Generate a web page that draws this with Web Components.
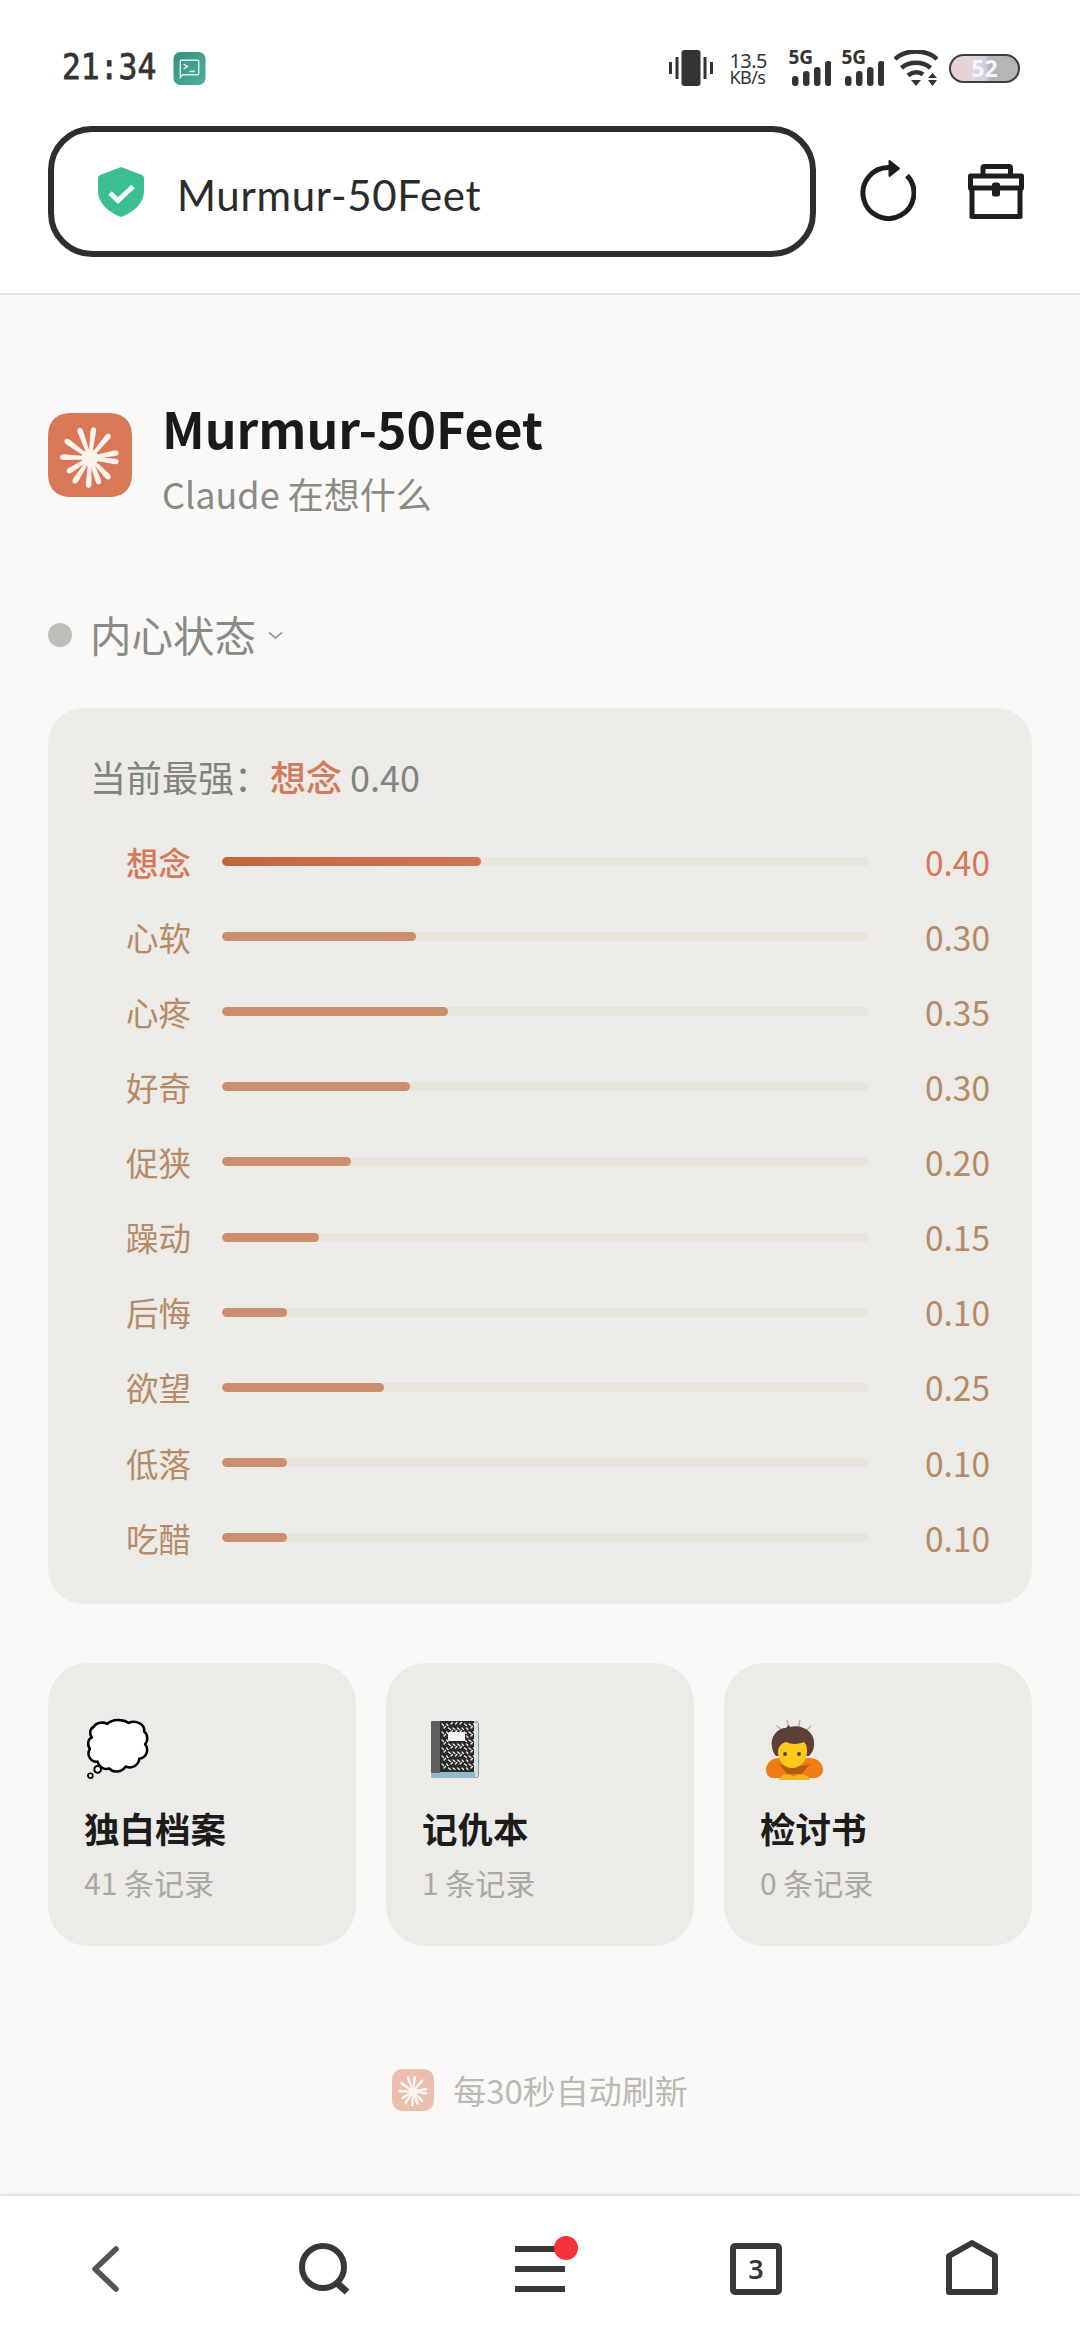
<!DOCTYPE html>
<html lang="zh-CN">
<head>
<meta charset="utf-8">
<title>Murmur-50Feet</title>
<style>
  html, body { margin: 0; padding: 0; background: #faf9f7; }
  body { width: 1080px; height: 2344px; overflow: hidden; display: flex; flex-direction: column;
         font-family: "Noto Sans CJK SC", "Noto Sans", sans-serif; }
  app-main { flex: 1; }
</style>
</head>
<body>
<status-bar></status-bar>
<address-bar title-text="Murmur-50Feet"></address-bar>
<app-main>
  <page-header></page-header>
  <state-heading>内心状态</state-heading>
  <mood-panel strongest="想念" strongest-value="0.40">
    <mood-row name="想念" value="0.40" pct="40" lead></mood-row>
    <mood-row name="心软" value="0.30" pct="30"></mood-row>
    <mood-row name="心疼" value="0.35" pct="35"></mood-row>
    <mood-row name="好奇" value="0.30" pct="29"></mood-row>
    <mood-row name="促狭" value="0.20" pct="20"></mood-row>
    <mood-row name="躁动" value="0.15" pct="15"></mood-row>
    <mood-row name="后悔" value="0.10" pct="10"></mood-row>
    <mood-row name="欲望" value="0.25" pct="25"></mood-row>
    <mood-row name="低落" value="0.10" pct="10"></mood-row>
    <mood-row name="吃醋" value="0.10" pct="10"></mood-row>
  </mood-panel>
  <card-row>
    <record-card name="独白档案" count="41 条记录" icon="thought"></record-card>
    <record-card name="记仇本" count="1 条记录" icon="notebook"></record-card>
    <record-card name="检讨书" count="0 条记录" icon="bow"></record-card>
  </card-row>
  <refresh-note>每30秒自动刷新</refresh-note>
</app-main>
<nav-bar></nav-bar>

<script>
  const CJK = '"Noto Sans CJK SC", "Noto Sans", sans-serif';

  // Sunburst mark shared by the header logo and the refresh note.
  function burstSvg(w, h, fill, ray) {
    const rays = [[-110, 32], [-83, 31], [-50, 31], [-11, 29], [8, 29], [46, 29], [70, 28], [93, 30], [123, 30], [148, 27], [182, 30], [216, 31]];
    const cx = 42, cy = 45;
    const paths = rays.map(([a, l]) =>
      `<path transform="rotate(${a} ${cx} ${cy})" d="M${cx} ${cy - 1.5} L${cx + l - 4} ${cy - 2.8} Q${cx + l} ${cy - 2.8} ${cx + l} ${cy} Q${cx + l} ${cy + 2.8} ${cx + l - 4} ${cy + 2.8} L${cx} ${cy + 1.500} Z" fill="${ray}"/>`
    ).join('');
    return `<svg width="${w}" height="${h}" viewBox="0 0 84 84" preserveAspectRatio="none" style="display:block">
      <path d="M24 0H60C76 0 84 8 84 24V60C84 76 76 84 60 84H24C8 84 0 76 0 60V24C0 8 8 0 24 0Z" fill="${fill}"/>
      ${paths}<circle cx="${cx}" cy="${cy}" r="8.500" fill="${ray}"/></svg>`;
  }

  function define(name, html) {
    customElements.define(name, class extends HTMLElement {
      connectedCallback() {
        if (this.shadowRoot) return;
        const root = this.attachShadow({ mode: 'open' });
        root.innerHTML = typeof html === 'function' ? html(this) : html;
      }
    });
  }

  const signalBars = `<svg width="39" height="36" viewBox="0 0 39 36" fill="#333">
    <rect x="0" y="26" width="6.500" height="10" rx="3"/><rect x="11" y="21" width="6.500" height="15" rx="3"/><rect x="22" y="17" width="6.500" height="19" rx="3"/><rect x="33" y="11" width="6.500" height="25" rx="3"/>
  </svg>`;

  define('status-bar', `
    <style>
      :host { display: flex; align-items: center; height: 124px; flex: none; box-sizing: border-box; padding: 12px 60px 0 62px; background: #fff; }
      .time { display: block; width: 94px; margin-top: -2px; white-space: nowrap; transform: scaleX(.87); transform-origin: left center; font: 400 36px/1 "DejaVu Sans Mono", monospace; -webkit-text-stroke: .8px #333; color: #333; }
      .app { margin-left: 17px; display: block; }
      .right { margin-left: auto; display: flex; align-items: center; }
      .speed { display: flex; flex-direction: column; width: 37px; margin: 0 23px 0 17px; color: #333; font-family: "Noto Sans", sans-serif; white-space: nowrap; }
      .speed b { font-weight: 400; font-size: 20px; line-height: 19px; letter-spacing: -.6px; }
      .speed i { font-style: normal; font-size: 18px; line-height: 15px; letter-spacing: -.6px; }
      .sig { position: relative; display: block; width: 41px; height: 36px; margin-right: 12px; }
      .sig.last { margin-right: 10px; }
      .sig span { position: absolute; left: -1px; top: -3px; font: 700 19px/20px "Noto Sans", sans-serif; color: #333; }
      .sig svg { position: absolute; left: 2px; top: 0; }
      .batt { width: 71px; height: 29px; margin-left: 11.500px; box-sizing: border-box; border: 2.200px solid #3c3c3c; border-radius: 15px;
              background: linear-gradient(90deg, #e9cfd2 0, #e4d3dc 30%, #cfd3e2 50%, #b5b5b5 58%, #b5b5b5 100%);
              display: flex; align-items: center; justify-content: center; color: #f4f4f8; font: 700 23px/1 "Noto Sans", sans-serif; }
      svg { display: block; }
    </style>
    <span class="time">21:34</span>
    <svg class="app" width="33" height="33" viewBox="0 0 33 34">
      <defs><linearGradient id="g" x1="0" y1="0" x2="1" y2="1"><stop offset="0" stop-color="#378f80"/><stop offset="1" stop-color="#4cb39a"/></linearGradient></defs>
      <rect width="33" height="34" rx="7" fill="url(#g)"/>
      <path d="M7 9.500a1 1 0 0 1 1-1h17a1 1 0 0 1 1 1v13a1 1 0 0 1-1 1H9.500L7 26Z" fill="none" stroke="#dff1ec" stroke-width="1.500"/>
      <path d="M10.500 12.500l4 2.500-4 2.500" fill="none" stroke="#dff1ec" stroke-width="1.500"/>
      <path d="M16.500 20h5.500" stroke="#dff1ec" stroke-width="1.500"/>
    </svg>
    <div class="right">
      <svg width="44" height="36" viewBox="0 0 44 36" fill="#333">
        <rect x="12.500" y="0" width="19" height="36" rx="3"/>
        <rect x="6.500" y="7" width="3" height="22"/><rect x="0" y="12" width="3" height="12"/>
        <rect x="34.500" y="7" width="3" height="22"/><rect x="41" y="12" width="3" height="12"/>
      </svg>
      <div class="speed"><b>13.5</b><i>KB/s</i></div>
      <div class="sig"><span>5G</span>${signalBars}</div>
      <div class="sig last"><span>5G</span>${signalBars}</div>
      <svg width="44" height="36" viewBox="0 0 44 36" fill="none" stroke="#333" stroke-width="4.500">
        <path d="M1 9C12 -1 32 -1 43 9"/>
        <path d="M7.500 18C15 11 29 11 36.500 18"/>
        <path d="M14 25.500C18.500 21.500 25.500 21.500 29 24.500"/>
        <path d="M17 30H27L22 36Z" fill="#333" stroke="none"/>
        <path d="M34 28L38.500 23L43 28Z M34 30H43L38.500 36Z" fill="#333" stroke="none"/>
      </svg>
      <div class="batt">52</div>
    </div>
  `);

  define('address-bar', el => `
    <style>
      :host { display: flex; align-items: flex-start; height: 171px; flex: none; box-sizing: border-box; padding: 2px 56px 0 48px; background: #fff; border-bottom: 2px solid #e4e3e1; }
      .field { width: 768px; height: 131px; box-sizing: border-box; border: 6px solid #2e2e2e; border-radius: 44px; display: flex; align-items: center; padding-left: 44px; background: #fff; }
      .label { margin-left: 33px; margin-top: 6px; font: 400 42px/1 Lato, "Noto Sans", sans-serif; color: #2b2b2b; letter-spacing: .7px; }
      .tools { margin-left: auto; height: 131px; display: flex; align-items: center; gap: 52px; }
      svg { display: block; }
    </style>
    <div class="field">
      <svg width="46" height="50" viewBox="0 0 46 50">
        <path d="M23 0 L44 8 Q46 9 46 11 V24 C46 37 34 46 23 50 C12 46 0 37 0 24 V11 Q0 9 2 8 Z" fill="#3dbd92"/>
        <path d="M12 26l8 7.500 15-14" fill="none" stroke="#f4fbf8" stroke-width="5"/>
      </svg>
      <span class="label">${el.getAttribute('title-text')}</span>
    </div>
    <div class="tools">
      <svg width="56" height="61" viewBox="0 0 56 61" fill="none" style="margin-top:-2px">
        <path d="M47 15.500A25.500 25.500 0 1 1 29 7.500" stroke="#1e1e1e" stroke-width="5"/>
        <path d="M29.500 1 L39 8.500 L29.500 16 Z" fill="#1e1e1e" stroke="#1e1e1e" stroke-width="2" stroke-linejoin="round"/>
      </svg>
      <svg width="56" height="55" viewBox="0 0 56 55" fill="none" stroke="#1e1e1e" stroke-width="5" stroke-linejoin="round" style="margin-top:-1px">
        <path d="M15 11V4a1.500 1.500 0 0 1 1.500-1.500H41a1.500 1.500 0 0 1 1.500 1.500V11"/>
        <path d="M4 22V52.500H52V22"/>
        <path d="M2.500 12H53.500V24H2.500Z"/>
        <rect x="24" y="18.500" width="8" height="14" rx="2.500" fill="#1e1e1e" stroke="none"/>
      </svg>
    </div>
  `);

  define('app-main', `
    <style>
      :host { display: flex; flex-direction: column; padding: 0 48px; background: #faf9f7; }
    </style>
    <slot></slot>
  `);

  define('page-header', `
    <style>
      :host { display: flex; align-items: flex-start; margin-top: 102px; }
      .logo { margin: 16px 0 0 0; flex: none; }
      .text { margin: -3px 0 3px 30px; }
      h1 { margin: 0; font: 700 50px/66px ${CJK}; color: #1a1a1a; }
      p { margin: 8.500px 0 0; font: 400 36px/48px ${CJK}; color: #8a8a86; }
    </style>
    <div class="logo">${burstSvg(84, 84, '#d97857', '#fdf2ec')}</div>
    <div class="text"><h1>Murmur-50Feet</h1><p>Claude 在想什么</p></div>
  `);

  define('state-heading', `
    <style>
      :host { display: flex; align-items: center; margin-top: 87.500px; height: 60px; color: #8a8a86; font: 400 41.500px/60px ${CJK}; }
      .dot { width: 24px; height: 24px; border-radius: 50%; background: #bfbdb9; margin: -5px 18px 0 0; }
      .t { position: relative; top: -3px; }
      svg { margin: -4px 0 0 12px; }
    </style>
    <span class="dot"></span><span class="t"><slot></slot></span>
    <svg width="15" height="9" viewBox="0 0 15 9" fill="none" stroke="#8a8a86" stroke-width="1.600"><path d="M1 1.500l6.500 5.500 6.500-5.500"/></svg>
  `);

  define('mood-panel', el => `
    <style>
      :host { display: block; margin-top: 41px; height: 896px; box-sizing: border-box; padding: 44px 42px 0 44px; background: #ecebe7; border-radius: 36px; }
      .top { margin-left: -2px; font: 400 36px/48px ${CJK}; color: #82827e; margin-bottom: 24px; }
      .top b { font-weight: 500; color: #d4795a; }
    </style>
    <div class="top">当前最强：<b>${el.getAttribute('strongest')}</b> ${el.getAttribute('strongest-value')}</div>
    <slot></slot>
  `);

  define('mood-row', el => {
    const lead = el.hasAttribute('lead');
    const tone = lead ? '#d4795a' : '#b58a66';
    return `
    <style>
      :host { display: flex; align-items: center; height: 75.100px; font: 400 32.500px/1 ${CJK}; }
      .name { width: 99px; text-align: right; flex: none; margin-top: 1px; color: ${tone}; white-space: nowrap; font-weight: ${lead ? 500 : 400}; }
      .track { margin-left: 31px; width: 647px; height: 9px; border-radius: 5px; background: #e8e3db; flex: none; overflow: hidden; }
      .fill { height: 100%; width: ${el.getAttribute('pct')}%; border-radius: 5px; background: ${lead ? 'linear-gradient(90deg,#c2653a,#d0775a)' : '#cb8e6e'}; }
      .value { margin-left: auto; color: ${tone}; font-size: 33.500px; }
    </style>
    <span class="name">${el.getAttribute('name')}</span>
    <div class="track"><div class="fill"></div></div>
    <span class="value">${el.getAttribute('value')}</span>`;
  });

  define('card-row', `
    <style>
      :host { display: grid; grid-template-columns: repeat(3, 308px); column-gap: 30px; margin-top: 59px; }
    </style>
    <slot></slot>
  `);

  // Speckle of the composition-book cover, laid out as short scattered strokes.
  let speckle = '';
  for (let y = 3; y < 51; y += 4) {
    for (let x = 11 + (y % 8 === 3 ? 0 : 2); x < 43; x += 4.500) {
      const d = (x * 7 + y * 3) % 4;
      speckle += `M${x} ${y}l${d > 2 ? 2 : 1.5} ${d > 1 ? 1.5 : -1.5}`;
    }
  }

  const icons = {
    thought: `<svg width="62" height="64" viewBox="0 0 64 64" style="margin:0 0 0 3px;overflow:visible">
      <path d="M7 8C10 3 17 3 21 5C26 0 37 0 43 4C50 1 60 5 59 13C63 16 63 23 60 26C64 31 62 40 54 41C53 48 46 52 40 49C36 55 27 56 23 51C17 53 12 49 11 44C4 45 -1 37 3 31C0 27 1 20 5 19C2 15 3 10 7 8Z" fill="#fff" stroke="#000" stroke-width="2.600" stroke-linejoin="round"/>
      <circle cx="11" cy="52" r="3.500" fill="#fff" stroke="#000" stroke-width="2"/>
      <circle cx="3.500" cy="58.500" r="2.500" fill="#fff" stroke="#000" stroke-width="1.800"/>
    </svg>`,
    notebook: `<svg width="48" height="57" viewBox="0 0 48 57" style="margin:3px 0 0 9px">
      <rect x="2" y="1" width="45.500" height="55.500" rx="2" fill="#d5dde0" stroke="#8a9499"/>
      <rect x="0" y="51" width="44" height="6" rx="1.500" fill="#8fbccb"/>
      <rect x="0" y="0" width="9" height="52" rx="1" fill="#5e5e5e"/>
      <rect x="9" y="0" width="34" height="51" fill="#2a2a2a"/>
      <path d="${speckle}" stroke="#ececec" stroke-width="1.300" stroke-linecap="round" fill="none"/>
      <rect x="17" y="11" width="17" height="9" rx="1.500" fill="#f4f4f4"/>
    </svg>`,
    bow: `<svg width="57" height="60" viewBox="0 0 57 60" style="margin:2px 0 0 6px">
      <g stroke="#b9b5ae" stroke-width="1.500" stroke-linecap="round" fill="none"><path d="M11 6l5 4M21 0l1 5M34 0l-1 6M45 6l-4 4"/></g>
      <path d="M0 50C0 40 12 35 20 40H36C45 35 57 40 57 50C57 56 50 59 46 58H10C5 59 0 56 0 50Z" fill="#f17c14"/>
      <path d="M13 44C20 47 36 47 44 44L36 54H21Z" fill="#b75a12"/>
      <path d="M13 60C15 53 24 53 28 57C32 53 41 53 44 60Z" fill="#f3b61d"/>
      <path d="M6 27C4 16 12 8 20 8C22 5 23 4 24 7C36 4 50 12 48 26C47.500 30 46 33 43 36H10C8 34 6.500 31 6 27Z" fill="#5d4037"/>
      <path d="M12 32C12 26 16 23 20 22C26 25 34 24 38 22C41 25 41 28 41 32C41 42 33 48 26.500 48C19 48 12 42 12 32Z" fill="#fbc81c"/>
      <circle cx="19" cy="34" r="1.900" fill="#4a3b33"/><circle cx="33" cy="34" r="1.900" fill="#4a3b33"/>
    </svg>`
  };

  define('record-card', el => `
    <style>
      :host { display: flex; flex-direction: column; height: 283px; box-sizing: border-box; padding: 55px 36px 0; background: #ecebe7; border-radius: 40px; }
      .icon { height: 67px; display: flex; align-items: flex-start; }
      .name { margin-top: 18.500px; font: 700 35.500px/48px ${CJK}; color: #1c1c1c; }
      .count { margin-top: 9px; font: 400 30px/42px ${CJK}; color: #a9a8a4; }
    </style>
    <div class="icon">${icons[el.getAttribute('icon')]}</div>
    <div class="name">${el.getAttribute('name')}</div>
    <div class="count">${el.getAttribute('count')}</div>
  `);

  define('refresh-note', `
    <style>
      :host { display: flex; align-items: center; justify-content: center; margin-top: 123px; height: 42px; color: #bab9b5; font: 400 33px/42px ${CJK}; }
      .mark { margin-right: 19px; flex: none; opacity: .45; }
    </style>
    <div class="mark">${burstSvg(42, 42, '#d97857', '#fdf2ec')}</div><span><slot></slot></span>
  `);

  define('nav-bar', `
    <style>
      :host { display: flex; height: 150px; flex: none; box-sizing: border-box; background: #fff; border-top: 2px solid #e6e5e3; box-shadow: 0 -2px 4px rgba(0,0,0,.03); padding: 44px 0 0; }
      .item { flex: 1; display: flex; justify-content: center; }
      svg { display: block; overflow: visible; }
      .slot { position: relative; width: 56px; height: 56px; }
      .dot { position: absolute; left: 42px; top: -4px; width: 24px; height: 24px; border-radius: 50%; background: #f5333a; }
      .tab-n { position: absolute; inset: 0; display: flex; align-items: center; justify-content: center; font: 600 27px/1 "Noto Sans", sans-serif; color: #383838; padding-top: 1px; }
    </style>
    <div class="item"><svg width="56" height="56" viewBox="0 0 56 56" fill="none" stroke="#555" stroke-width="5.500" stroke-linejoin="round" stroke-linecap="round"><path d="M36 9L15 29L36 49"/></svg></div>
    <div class="item"><svg width="56" height="56" viewBox="0 0 56 56" fill="none" stroke="#383838" stroke-width="6"><circle cx="27" cy="27" r="21"/><path d="M41 43l10 9" stroke-width="7"/></svg></div>
    <div class="item"><div class="slot"><svg width="56" height="56" viewBox="0 0 56 56" fill="#383838"><rect x="3" y="6" width="50" height="6"/><rect x="3" y="26" width="50" height="6"/><rect x="3" y="46" width="50" height="6"/></svg><span class="dot"></span></div></div>
    <div class="item"><div class="slot"><svg width="56" height="56" viewBox="0 0 56 56" fill="none" stroke="#383838" stroke-width="6" stroke-linejoin="round"><rect x="5" y="6" width="46" height="46" rx="2"/></svg><span class="tab-n">3</span></div></div>
    <div class="item"><svg width="56" height="56" viewBox="0 0 56 56" fill="none" stroke="#383838" stroke-width="6" stroke-linejoin="round"><path d="M5 16L28 3L51 16V52H5Z"/></svg></div>
  `);
</script>
</body>
</html>
